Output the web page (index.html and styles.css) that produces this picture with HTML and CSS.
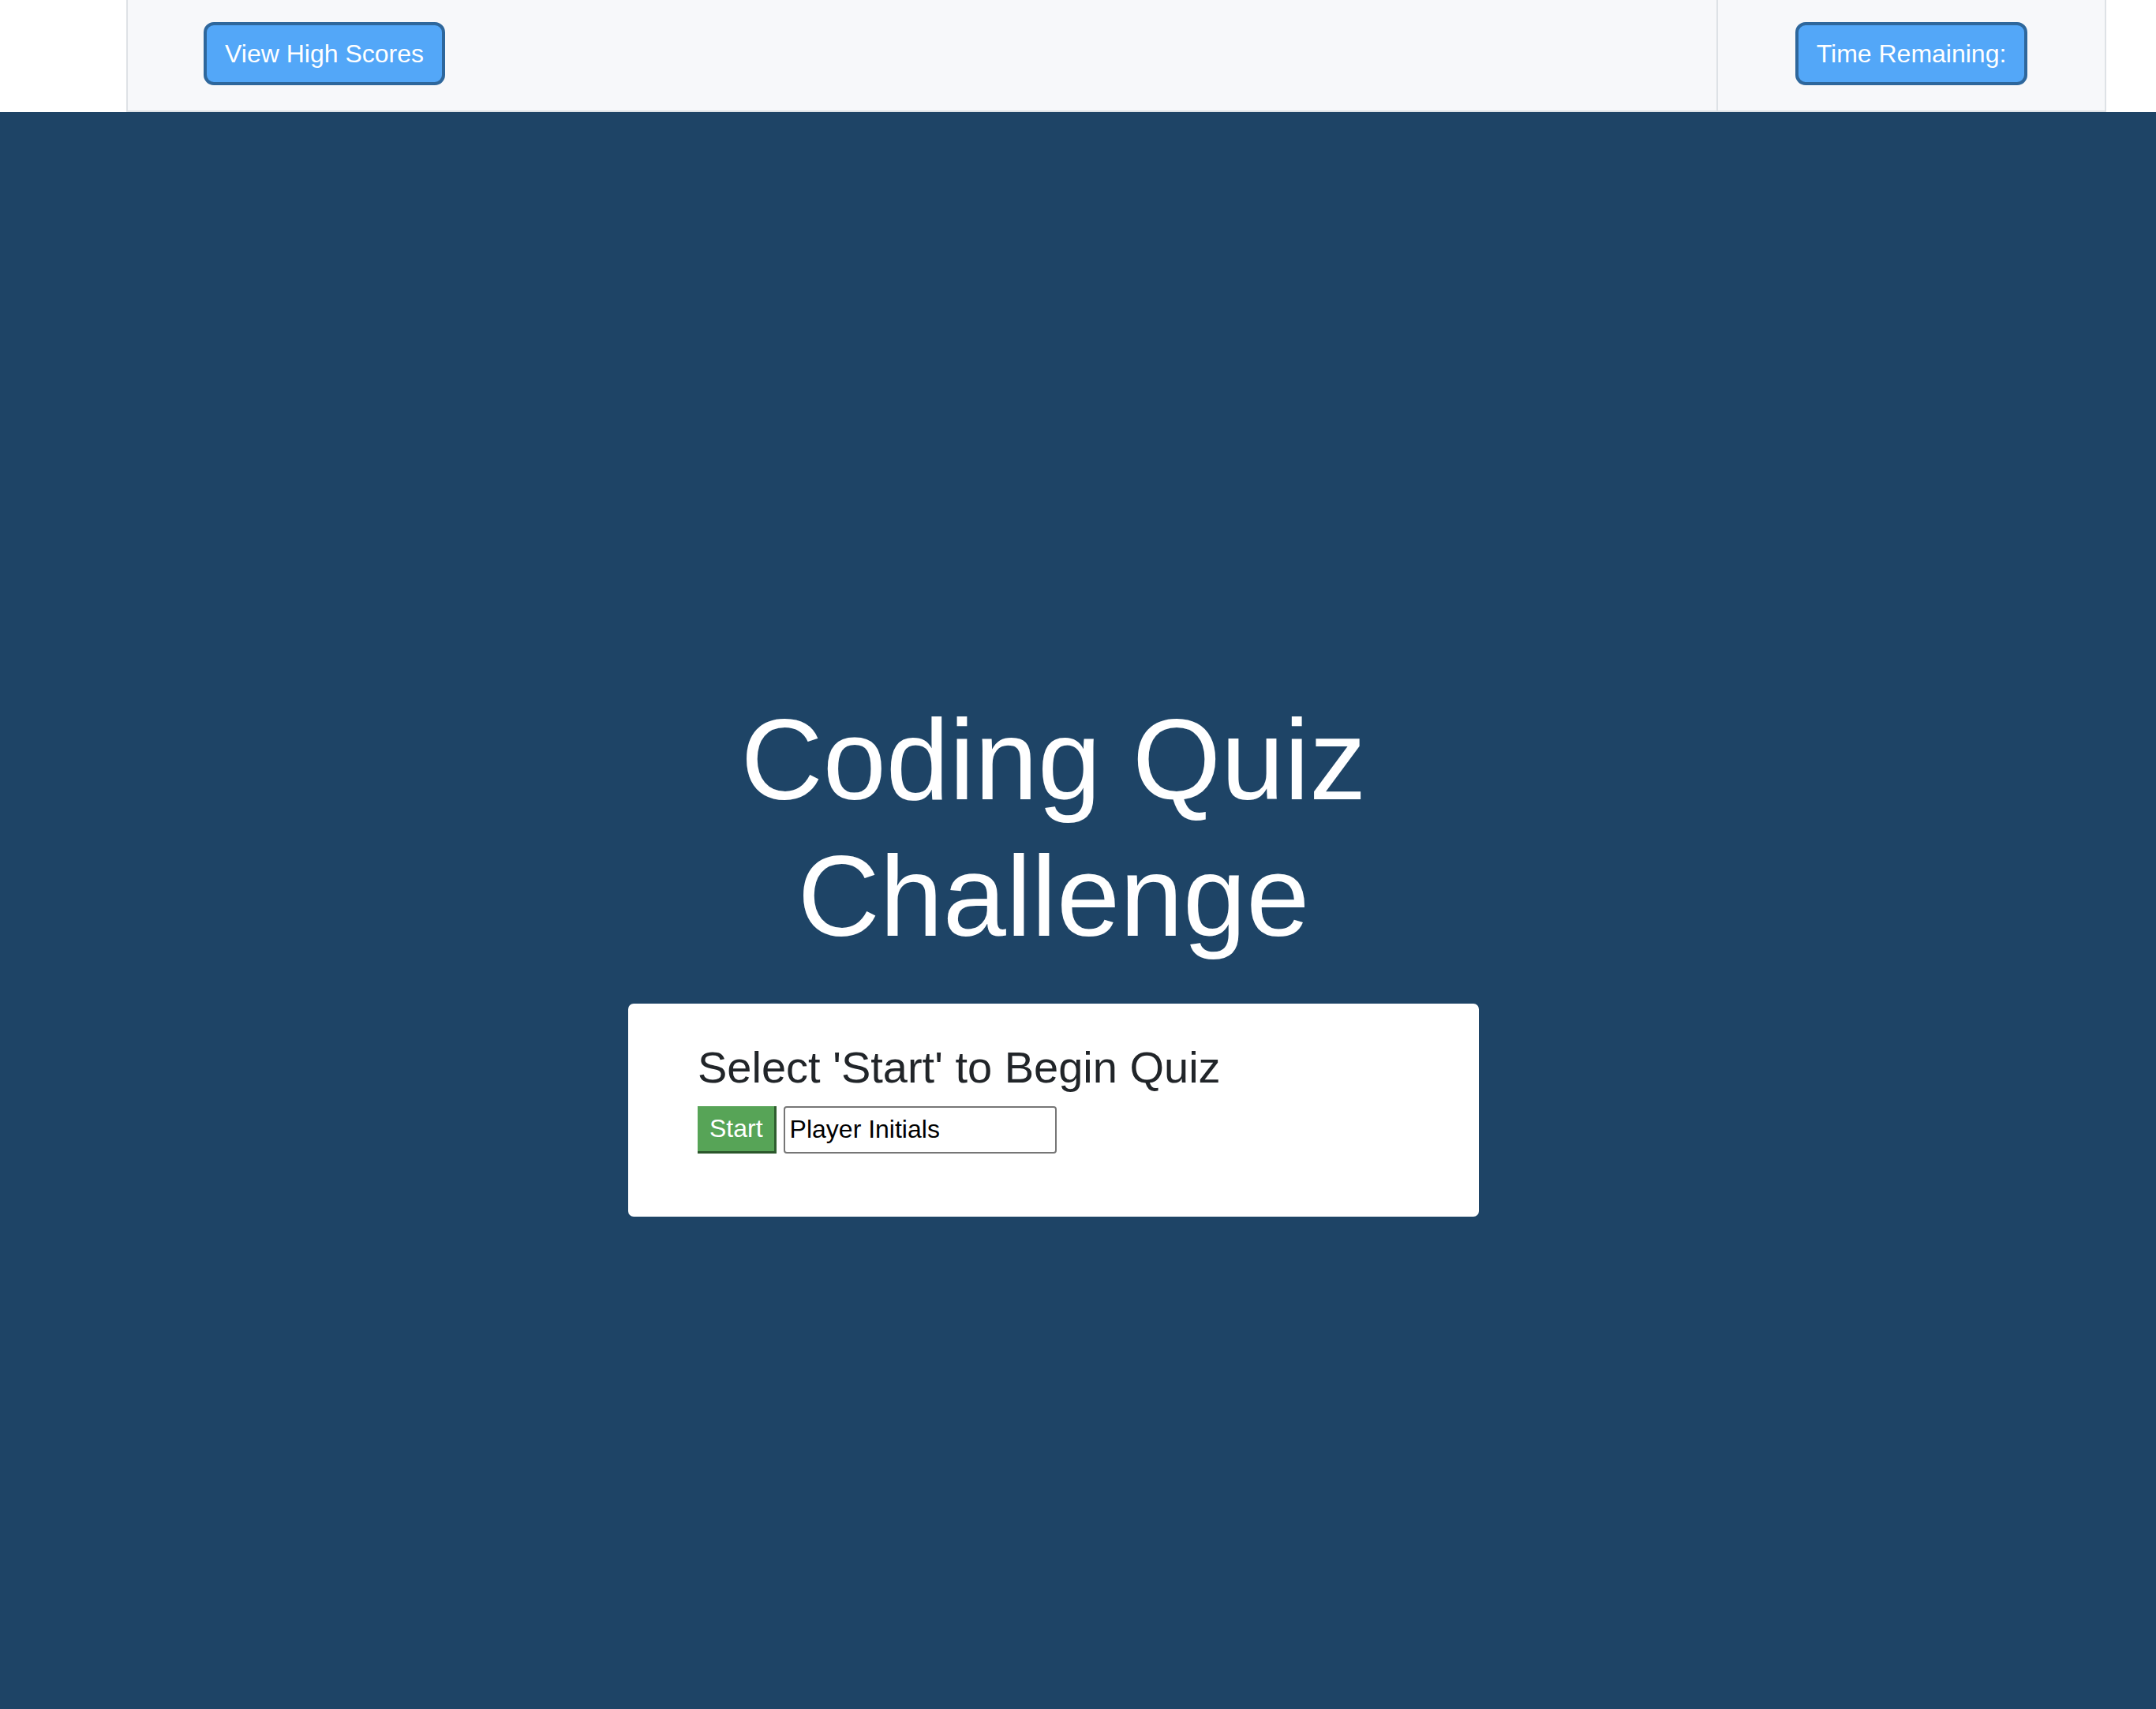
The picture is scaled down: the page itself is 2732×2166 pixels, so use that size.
FILE: index.html
```html
<!DOCTYPE html>
<html>
<head>
<meta charset="utf-8">
<title>Coding Quiz Challenge</title>
<link rel="stylesheet" href="styles.css">
</head>
<body>
  <header class="topbar">
    <div class="col col-main">
      <button class="pill-btn">View High Scores</button>
    </div>
    <div class="col col-timer">
      <button class="pill-btn">Time Remaining:</button>
    </div>
  </header>
  <main class="stage">
    <div class="content">
      <h1 class="title">Coding Quiz Challenge</h1>
      <section class="card">
        <h2 class="prompt">Select 'Start' to Begin Quiz</h2>
        <div class="controls">
          <button class="start-btn">Start</button>
          <input class="initials" type="text" value="Player Initials">
        </div>
      </section>
    </div>
  </main>
</body>
</html>
```
FILE: styles.css
```css
* { box-sizing: border-box; }
html {
  background: #1e4466;
}
html, body {
  margin: 0;
  padding: 0;
  font-family: "Liberation Sans", Arial, sans-serif;
}
body {
  background: #ffffff;
  overflow: hidden;
}
.topbar {
  display: flex;
  margin-left: 160px;
  width: 2509px;
  height: 142px;
  background: #f7f8fa;
  border-left: 2px solid #dee2e6;
  border-right: 2px solid #dee2e6;
  border-bottom: 2px solid #dee2e6;
}
.col {
  display: flex;
  align-items: flex-start;
  padding-top: 28px;
}
.col-main {
  width: 2013px;
  padding-left: 96px;
}
.col-timer {
  flex: 1;
  justify-content: center;
  border-left: 2px solid #dee2e6;
}
.pill-btn {
  height: 80px;
  padding: 0 23px;
  background: #53a7f8;
  border: 4px solid #2e679c;
  border-radius: 13px;
  color: #ffffff;
  font-family: "Liberation Sans", Arial, sans-serif;
  font-size: 32px;
  line-height: 1;
}
.stage {
  background: #1e4466;
  height: 2024px;
  padding-top: 736px;
}
.content {
  margin-left: 796px;
  width: 1078px;
}
.title {
  margin: 0;
  color: #ffffff;
  font-weight: normal;
  font-size: 144px;
  line-height: 1.2;
  text-align: center;
}
.card {
  margin-top: 48px;
  background: #ffffff;
  border-radius: 7px;
  padding: 47px 88px 80px;
}
.prompt {
  margin: 0;
  color: #212529;
  font-weight: normal;
  font-size: 56px;
  line-height: 1.2;
}
.controls {
  display: flex;
  gap: 9px;
  margin-top: 16px;
  height: 60px;
}
.start-btn {
  height: 60px;
  padding: 0 14px 0 15px;
  background: #57a457;
  border: 0;
  border-right: 3px solid #2f5e2f;
  border-bottom: 3px solid #2b562b;
  color: #ffffff;
  font-family: "Liberation Sans", Arial, sans-serif;
  font-size: 32px;
  line-height: 1;
}
.initials {
  width: 346px;
  height: 60px;
  padding: 0 6px;
  border: 2px solid #767676;
  border-radius: 4px;
  color: #000000;
  font-family: "Liberation Sans", Arial, sans-serif;
  font-size: 32px;
}
```
